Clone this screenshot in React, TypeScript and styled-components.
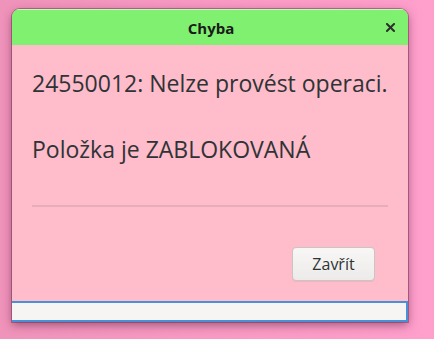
import React from "react";
import styled, { createGlobalStyle } from "styled-components";

const Global = createGlobalStyle`
  html, body { margin: 0; padding: 0; }
  body {
    width: 434px;
    height: 339px;
    overflow: hidden;
    background: linear-gradient(to right, #f093bb 0%, #f99bc4 60%, #ff9fcc 100%);
    font-family: "Open Sans", "Noto Sans", sans-serif;
  }
`;

const Desktop = styled.div`
  padding: 9px 0 0 12px;
`;

const Window = styled.div`
  width: 396px;
  height: 313px;
  display: flex;
  flex-direction: column;
  border-radius: 8px 8px 0 0;
  overflow: hidden;
  box-shadow: 0 3px 10px rgba(90, 30, 60, 0.55), 0 0 0 1px rgba(110, 50, 80, 0.45);
`;

const TitleBar = styled.div`
  height: 36px;
  flex: none;
  background: #80f070;
  border-top: 1px solid #c8f8c0;
  box-sizing: border-box;
  display: flex;
  align-items: center;
  justify-content: center;
  position: relative;
`;

const Title = styled.span`
  font-size: 15px;
  font-weight: 700;
  color: #1a1a1a;
  margin-left: 2px;
`;

const CloseButton = styled.div`
  position: absolute;
  right: 13px;
  top: 12px;
  width: 10px;
  height: 10px;
  display: flex;
  align-items: center;
  justify-content: center;
`;

const Body = styled.div`
  flex: 1;
  background: #ffbcca;
  display: flex;
  flex-direction: column;
  padding: 23px 20px 0 20px;
`;

const Message = styled.p`
  margin: 0;
  font-size: 23px;
  line-height: 30px;
  color: #2e3436;
  white-space: nowrap;
`;

const Gap = styled.div<{ h: number }>`
  height: ${(p) => p.h}px;
  flex: none;
`;

const Separator = styled.div`
  height: 2px;
  flex: none;
  background: #e8adbb;
`;

const Actions = styled.div`
  display: flex;
  justify-content: flex-end;
  padding: 40px 13px 0 0;
`;

const Button = styled.button`
  width: 83px;
  height: 34px;
  border: 1px solid #c9c5c2;
  border-radius: 4px;
  background: linear-gradient(#f8f7f6, #ecebe9);
  font-family: "Open Sans", "Noto Sans", sans-serif;
  font-size: 16px;
  color: #2e3436;
  box-shadow: 0 1px 0 rgba(0,0,0,0.05);
  padding: 0;
`;

const Footer = styled.div`
  height: 21px;
  flex: none;
  box-sizing: border-box;
  background: #f6f5f3;
  border-top: 2px solid #4a90d9;
  border-bottom: 2px solid #4a90d9;
  border-right: 2px solid #4a90d9;
`;

export default function App() {
  return (
    <>
      <Global />
      <Desktop>
        <Window>
          <TitleBar>
            <Title>Chyba</Title>
            <CloseButton>
              <svg width="9" height="9" viewBox="0 0 9 9">
                <path d="M1 1L8 8M8 1L1 8" stroke="#2e2e2e" strokeWidth="2" strokeLinecap="square" />
              </svg>
            </CloseButton>
          </TitleBar>
          <Body>
            <Message>24550012: Nelze provést operaci.</Message>
            <Gap h={36} />
            <Message>Položka je ZABLOKOVANÁ</Message>
            <Gap h={41} />
            <Separator />
            <Actions>
              <Button>Zavřít</Button>
            </Actions>
          </Body>
          <Footer />
        </Window>
      </Desktop>
    </>
  );
}
